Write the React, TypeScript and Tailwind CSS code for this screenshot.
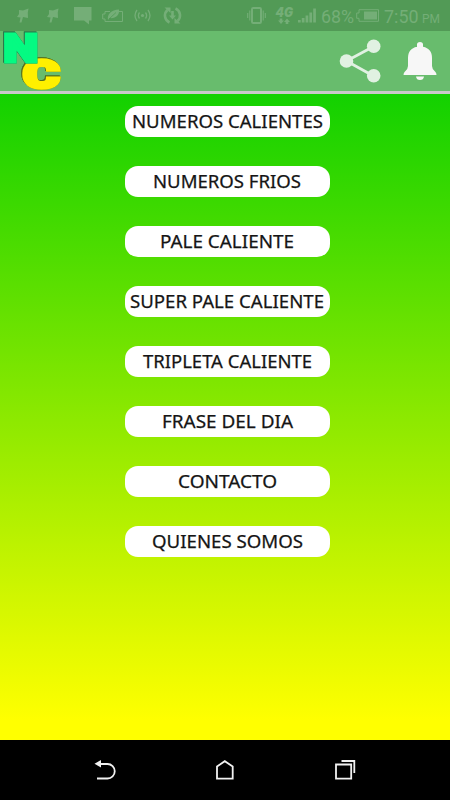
const menu = [
  { label: 'NUMEROS CALIENTES', width: 191 },
  { label: 'NUMEROS FRIOS', width: 148 },
  { label: 'PALE CALIENTE', width: 134 },
  { label: 'SUPER PALE CALIENTE', width: 194 },
  { label: 'TRIPLETA CALIENTE', width: 169 },
  { label: 'FRASE DEL DIA', width: 131 },
  { label: 'CONTACTO', width: 99 },
  { label: 'QUIENES SOMOS', width: 151 },
];

function FlagIcon() {
  return (
    <svg width="12" height="15" viewBox="0 0 12 15" fill="currentColor">
      <path d="M2 2 6 2.500 11.500 .5 10.800 4.500 11 10 6 9 4.500 14.500H2.500L3.500 9.500 0 9 2 6Z" />
    </svg>
  );
}

function StatusBar() {
  return (
    <div className="flex h-[31px] items-center bg-[#529a56] pl-[17px] text-[#74ae77]">
      <FlagIcon />
      <div className="w-[18px]" />
      <FlagIcon />
      <svg className="ml-[15px]" width="18" height="18" viewBox="0 0 18 18" fill="currentColor">
        <path d="M0 0H17.500V13.500H15V17.500L10 13.500H0Z" />
      </svg>
      {/* battery saver */}
      <svg className="ml-[10px]" width="22" height="16" viewBox="0 0 22 16" fill="none" stroke="currentColor">
        <path d="M8 3.500H3V6H.7V11H3V13.500H20.500V3.500H17" strokeWidth="1" />
        <path d="M6 12C5 6 9 2 17 1.500C18 7 13 11 7.500 10Z" fill="currentColor" stroke="none" />
        <path d="M7 11 14 4.500" stroke="#529a56" strokeWidth=".8" />
      </svg>
      {/* hotspot */}
      <svg className="ml-[10px]" width="17" height="13" viewBox="0 0 17 13" fill="none" stroke="currentColor" strokeWidth="1.3">
        <circle cx="8.500" cy="6.500" r="1.600" fill="currentColor" stroke="none" />
        <path d="M5.500 3.500Q3.300 6.500 5.500 9.500M3 1Q-1 6.500 3 12M11.500 3.500Q13.700 6.500 11.500 9.500M14 1Q18 6.500 14 12" />
      </svg>
      {/* sync */}
      <svg className="ml-[12px]" width="19" height="19" viewBox="0 0 19 19" fill="none" stroke="currentColor" strokeWidth="2.6">
        <path d="M6.500 16.500A7.500 7.500 0 0 1 4.500 4M12.500 2.500A7.500 7.500 0 0 1 14.500 15" />
        <path d="M1.500 1.500H7.500V7ZM17.500 17.500H11.500V12Z" fill="currentColor" stroke="none" />
        <path d="M8.200 5H10.800V9.500H13L9.500 13.500 6 9.500H8.200Z" fill="currentColor" stroke="none" />
      </svg>
      {/* vibrate */}
      <svg className="ml-[65px]" width="19" height="17" viewBox="0 0 19 17" fill="none" stroke="currentColor">
        <rect x="5" y="1" width="9" height="15" rx="1.200" strokeWidth="2" />
        <path d="M2.800 3.500V13.500M.7 6V11M16.200 3.500V13.500M18.300 6V11" strokeWidth="1.1" />
      </svg>
      <svg className="ml-[9px] overflow-visible" width="19" height="19" viewBox="0 0 19 19" fill="currentColor">
        <text x="0.500" y="10.500" textLength="17.500" lengthAdjust="spacingAndGlyphs" className="font-['Inter',sans-serif] text-[12.5px] font-black italic">4G</text>
        <path d="M4.700 12.500H7.300V14.500H9L6 18 3 14.500H4.700ZM10.700 18H13.300V16H15L12 12.500 9 16H10.700Z" />
      </svg>
      <svg className="ml-[4px]" width="18" height="15" viewBox="0 0 18 15" fill="currentColor">
        <path d="M0 12H2.700V14.500H0ZM3.800 10H6.500V14.500H3.800ZM7.600 7.500H10.300V14.500H7.600ZM11.400 4.500H14.100V14.500H11.400ZM15.200 .5H17.900V14.500H15.200Z" />
      </svg>
      <svg className="ml-[5px] overflow-visible" width="34" height="20" viewBox="0 0 34 20" fill="currentColor">
        <text x="0" y="17" textLength="33" lengthAdjust="spacingAndGlyphs" className="font-['Roboto',sans-serif] text-[17.5px]">68%</text>
      </svg>
      <svg className="ml-[1px]" width="24" height="13" viewBox="0 0 24 13" fill="none" stroke="currentColor">
        <path d="M3 .7H22.500V12.300H3V9.300H.7V4H3Z" />
        <path d="M8 2.500H21V10.500H8Z" fill="currentColor" stroke="none" />
      </svg>
      <svg className="ml-[4px] overflow-visible" width="57" height="20" viewBox="0 0 57 20" fill="currentColor">
        <text x="0" y="17" textLength="34.500" lengthAdjust="spacingAndGlyphs" className="font-['Roboto',sans-serif] text-[17.5px]">7:50</text>
        <text x="38" y="17" textLength="18" lengthAdjust="spacingAndGlyphs" className="font-['Roboto',sans-serif] text-[12px]">PM</text>
      </svg>
    </div>
  );
}

function Logo() {
  return (
    <svg className="ml-[2px] overflow-visible" width="60" height="60" viewBox="0 0 60 60">
      <g className="font-['Roboto',sans-serif] font-black">
        <text
          x="21" y="57.300" textLength="36.500" lengthAdjust="spacingAndGlyphs" fill="#fff000" stroke="#fff000" strokeWidth="3.6"
          className="text-[39px] [filter:drop-shadow(0.3px_0.3px_0_#56701f)_drop-shadow(-0.3px_-0.3px_0_#56701f)]"
        >
          C
        </text>
        <text
          x="1.500" y="31" textLength="34.500" lengthAdjust="spacingAndGlyphs" fill="#05fa82" stroke="#05fa82" strokeWidth="3.2"
          className="text-[38.5px] [filter:drop-shadow(0.3px_0.3px_0_#2b774a)_drop-shadow(-0.3px_-0.3px_0_#2b774a)]"
        >
          N
        </text>
      </g>
    </svg>
  );
}

function Header() {
  return (
    <header className="flex h-[63px] items-start border-b-[3px] border-[#c9c9c9] bg-[#68bc6d]">
      <Logo />
      <svg className="ml-[277px]" width="44" height="60" viewBox="0 0 44 60" fill="#e1f1e2" stroke="#e1f1e2">
        <path d="M34.500 15.500 7.500 30 34.500 45" fill="none" strokeWidth="2.8" />
        <circle cx="34.700" cy="15.300" r="6.800" stroke="none" />
        <circle cx="7.500" cy="30" r="6.800" stroke="none" />
        <circle cx="34.700" cy="44.800" r="6.800" stroke="none" />
      </svg>
      <svg className="ml-[20px]" width="34" height="60" viewBox="0 0 34 60" fill="#f7f7f7">
        <path d="M14 17.500V13.500Q14 11 17 11Q20 11 20 13.500V15.800C26 17 29 21 29 27V35Q29 38 32 40.500Q33.500 41.800 33.500 44H.5Q.5 41.800 2 40.500Q5 38 5 35V27C5 21 8 17 14 15.800Z" />
        <path d="M13 45.500H21Q20.500 49 17 49Q13.500 49 13 45.500Z" />
      </svg>
    </header>
  );
}

function MenuButton({ label, width }: { label: string; width: number }) {
  return (
    <button className="flex h-[31px] w-[205px] items-center justify-center rounded-[13px] bg-white pr-px">
      <svg className="overflow-visible" width={width} height="24" fill="#151515" stroke="#151515" strokeWidth=".25">
        <text x="0" y="18" textLength={width} lengthAdjust="spacingAndGlyphs" className="font-['Noto_Sans',sans-serif] text-[18px] font-normal">
          {label}
        </text>
      </svg>
    </button>
  );
}

function NavBar() {
  return (
    <nav className="flex h-[60px] items-center bg-black pl-[94px] text-[#f2f2f2]">
      <svg width="22" height="22" viewBox="0 0 22 22" fill="none" stroke="currentColor" strokeWidth="1.8">
        <path d="M6 5H13.500A7 7 0 0 1 13.500 19.500H3" />
        <path d="M.5 4.800 7 1V8.500Z" fill="currentColor" stroke="none" />
      </svg>
      <svg className="ml-[99px]" width="20" height="22" viewBox="0 0 20 22" fill="none" stroke="currentColor" strokeWidth="1.8">
        <path d="M2 7.500 9.800 2.200 17.700 7.500V19.600H2Z" />
      </svg>
      <svg className="ml-[99px]" width="22" height="22" viewBox="0 0 22 22" fill="none" stroke="currentColor" strokeWidth="1.8">
        <path d="M2 5.500H17.200V19.700H2ZM7.500 2H20.300V14" />
      </svg>
    </nav>
  );
}

export default function App() {
  return (
    <div className="flex h-[800px] w-[450px] flex-col overflow-hidden">
      <StatusBar />
      <Header />
      <main className="flex flex-1 flex-col items-center gap-[29px] bg-[linear-gradient(to_bottom,#12d100,#ffff00_97%)] pt-3 pl-[5px]">
        {menu.map(item => (
          <MenuButton key={item.label} label={item.label} width={item.width} />
        ))}
      </main>
      <NavBar />
    </div>
  );
}
